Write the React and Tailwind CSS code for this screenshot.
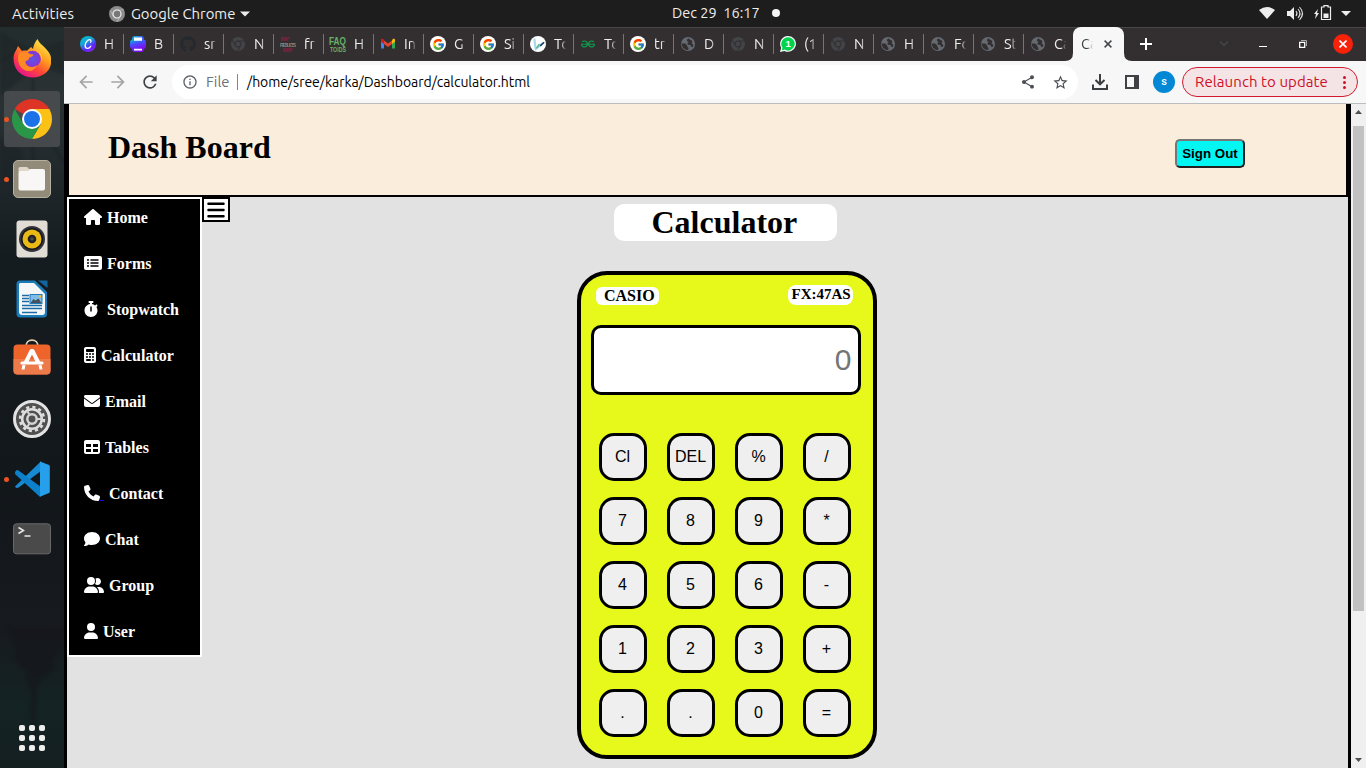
import React from "react";
import {
  FaHouse, FaRectangleList, FaStopwatch, FaCalculator, FaEnvelope, FaTable,
  FaPhone, FaComment, FaUserGroup, FaUser, FaBars, FaGithub, FaChrome,
} from "react-icons/fa6";
import { FcGoogle } from "react-icons/fc";
import { MdArrowBack, MdArrowForward, MdRefresh, MdInfoOutline, MdShare, MdStarBorder } from "react-icons/md";
import { SiGeeksforgeeks } from "react-icons/si";

const ui = "font-['Ubuntu','Open_Sans','Noto_Sans',sans-serif]";

/* ---------- favicons ---------- */
const Canva = () => (
  <svg viewBox="0 0 16 16" className="size-4">
    <defs>
      <linearGradient id="cv" x1="0.1" y1="0" x2="0.7" y2="1">
        <stop offset="0" stopColor="#00c4cc" /><stop offset="0.4" stopColor="#16a4d8" /><stop offset="0.75" stopColor="#6420ff" /><stop offset="1" stopColor="#7d2ae7" />
      </linearGradient>
    </defs>
    <circle cx="8" cy="8" r="8" fill="url(#cv)" />
    <path d="M10.600 6.200c.7-1.300.3-2.500-.9-2.500-2.300 0-4.600 3-4.600 5.700 0 1.900 1 2.900 2.400 2.900 1.400 0 2.600-.9 3.300-2.200" fill="none" stroke="#fff" strokeWidth="1.300" strokeLinecap="round" />
  </svg>
);
const Printer = () => (
  <svg viewBox="0 0 16 16" className="size-4">
    <defs><linearGradient id="pr" x1="0" y1="0" x2="0.5" y2="1"><stop offset="0" stopColor="#00c4cc" /><stop offset="0.5" stopColor="#4a4cff" /><stop offset="1" stopColor="#7d10f0" /></linearGradient></defs>
    <rect x="2" y="0" width="12" height="16" rx="3" fill="url(#pr)" />
    <rect x="0" y="3.500" width="16" height="9.500" rx="3" fill="url(#pr)" />
    <path d="M4 1.500h8v3.300H4zM4 12.700h8v1.800H4z" fill="#fff" />
  </svg>
);
const Results = () => (
  <svg viewBox="0 0 16 16" className="size-4 font-['Liberation_Sans',sans-serif]">
    <path d="M1 2h9M1 4h7M3 13h10M3 15h9" stroke="#7a2240" strokeWidth="1.300" />
    <text x="0" y="10.500" fontSize="5" fontWeight="700" fill="#858585" textLength="16">RESULTS</text>
  </svg>
);
const Faq = () => (
  <svg viewBox="0 0 16 16" className="size-4 overflow-visible font-['Liberation_Sans',sans-serif]">
    <text x="-1" y="8.500" fontSize="11" fontWeight="700" fill="#67b168" textLength="17" lengthAdjust="spacingAndGlyphs">FAQ</text>
    <text x="0" y="16" fontSize="7.500" fontWeight="700" fill="#67b168" textLength="16" lengthAdjust="spacingAndGlyphs">TOIDS</text>
  </svg>
);
const Gmail = () => (
  <svg viewBox="0 0 16 16" className="size-4">
    <path d="M1 5v7.500h3V7.200z" fill="#4285f4" /><path d="M15 5v7.500h-3V7.200z" fill="#34a853" />
    <path d="M12 4.300V8l3-2.300V4c0-1.200-1.300-1.600-2.200-.9z" fill="#fbbc04" />
    <path d="M4 8V4.500L8 7.600l4-3.100V8l-4 3z" fill="#ea4335" /><path d="M1 4c0-1.200 1.300-1.600 2.200-.9L4 4v4L1 5.700z" fill="#c5221f" />
  </svg>
);
const Google = () => (
  <span className="flex size-4 items-center justify-center rounded-full bg-white"><FcGoogle className="size-[13px]" /></span>
);
const Pen = () => (
  <svg viewBox="0 0 16 16" className="size-4">
    <circle cx="8" cy="8" r="8" fill="#fff" />
    <path d="M4.300 2.500l1.200 9.500" fill="none" stroke="#a5dcec" strokeWidth="2.200" />
    <path d="M5 13.800L13 7" stroke="#8fd0e6" strokeWidth="1.800" />
    <path d="M6.500 12l3-4" stroke="#54b88a" strokeWidth="1.300" />
    <path d="M9.800 9.200l3.700-3.400 1.200 1-4 3.600z" fill="#173b66" />
  </svg>
);
const Geeks = () => <SiGeeksforgeeks className="size-[14px] text-[#0f9a4a]" />;
const Globe = () => (
  <svg viewBox="0 0 16 16" className="size-4">
    <circle cx="8" cy="8" r="7" fill="#656a70" />
    <path d="M1.500 7.600h3.700l2.100 1.900v1.300l1.100.9v2.100l-2 .1c-2.600-.7-4.600-3-4.900-6.300zM7.200 3.200l1.800-1 .5 1.300 1.800.6 1.200 1.600-1 1.500 1.800 1.500-.3 2.100-1.700.2-.9-2-2.300-.3-.9-1.500 1.500-1.300-1.800-1z" fill="#332f31" />
  </svg>
);
const Chat1 = () => (
  <svg viewBox="0 0 16 16" className="size-4 font-['Liberation_Sans',sans-serif]">
    <path d="M8.200 0a7.900 7.900 0 1 1-3.800 14.900L0 16l1.200-4.200A7.900 7.900 0 0 1 8.200 0z" fill="#fff" />
    <path d="M8.200 1.200a6.700 6.700 0 1 1-3.700 12.400l-2.800.8.800-2.700A6.700 6.700 0 0 1 8.200 1.200z" fill="#00d34d" />
    <text x="5.600" y="11.300" fontSize="9.500" fontWeight="700" fill="#fff">1</text>
  </svg>
);
const Hub = () => <FaGithub className="size-4 text-[#24292e]" />;
const Chr = () => <FaChrome className="size-[14px] text-[#424447]" />;

const tabs = [
  [Canva, "H"], [Printer, "B"], [Hub, "sr"], [Chr, "N"], [Results, "fr"], [Faq, "H"], [Gmail, "In"],
  [Google, "G"], [Google, "Si"], [Pen, "To"], [Geeks, "To"], [Google, "tr"], [Globe, "D"], [Chr, "N"],
  [Chat1, "(1"], [Chr, "N"], [Globe, "H"], [Globe, "Fo"], [Globe, "St"], [Globe, "Ca"],
];

function Tab({ Icon, label }) {
  return (
    <div className="flex h-full w-[50px] shrink-0 items-center pl-[6px]">
      <span className="flex size-4 shrink-0 items-center justify-center"><Icon /></span>
      <span className="ml-2 w-[12px] overflow-hidden whitespace-nowrap text-[14.500px] leading-5 text-[#f0efef] [mask-image:linear-gradient(to_right,black_60%,transparent)]">{label}</span>
      <span className="ml-auto h-5 w-px bg-[#767475]" />
    </div>
  );
}

/* ---------- dock ---------- */
const Firefox = () => (
  <svg viewBox="0 0 38 40" className="-mt-[2px] h-10 w-[38px]">
    <defs>
      <linearGradient id="ff" x1="0.85" y1="0.05" x2="0.25" y2="0.95"><stop offset="0" stopColor="#fff14a" /><stop offset="0.4" stopColor="#ff9a1f" /><stop offset="0.7" stopColor="#ff4538" /><stop offset="1" stopColor="#e8158c" /></linearGradient>
      <radialGradient id="fp"><stop offset="0" stopColor="#5b55e8" /><stop offset="1" stopColor="#8a35d0" /></radialGradient>
    </defs>
    <path d="M5 8l4 5c1.500-.6 3.400-.6 5-.3l4-3.700 2 2c.6-4 2-7 4.500-10 1.500 5 10 9 13 16.500C41 31 31.500 39.500 19.500 39.500 8 39.500.5 31 .5 20.500.5 16 2.200 13.500 3 12.500z" fill="url(#ff)" />
    <circle cx="19.500" cy="21" r="8.300" fill="url(#fp)" />
    <path d="M6 15c4-2.200 8-1.500 11 1 1.500.2 3 .3 3.500 1-.6 1.800-3.200 1.800-4.500 3 .2 2.500-2.400 2.300-3.500 3.500C12 29 20 31 24 27c-2 6-9 8-14 4-5-4-6-10-4-16z" fill="#ff8a25" />
    <path d="M21 12c5 1 8 6 7 11 3-6-.5-12-7-11z" fill="#ffbd36" />
  </svg>
);
const ChromeLogo = () => (
  <svg viewBox="0 0 40 40" className="size-10">
    <path d="M20 20L2.680 10A20 20 0 0 1 37.320 10z" fill="#de3426" />
    <path d="M37.320 10A20 20 0 0 1 20 40l8.700-15L20 10z" fill="#fbc116" />
    <path d="M20 40A20 20 0 0 1 2.680 10l8.660 15L28.700 25z" fill="#2a9748" />
    <circle cx="20" cy="20" r="10" fill="#fff" /><circle cx="20" cy="20" r="8" fill="#1b72e8" />
  </svg>
);
const Files = () => (
  <svg viewBox="0 0 38 38" className="size-[38px]">
    <rect x="0.500" y="0.500" width="37" height="37" rx="4.500" fill="#938b79" stroke="#b6b0a2" />
    <path d="M5.500 12V8.500Q5.500 7 7 7h6.500q1 0 1.500.8l.8 1.200H20v3z" fill="#ded7ca" />
    <path d="M5.500 13q0-2 2-2h7.500l3-2H30q2 0 2 2V28.500q0 2-2 2H7.500q-2 0-2-2z" fill="#f9f7f5" />
  </svg>
);
const Speaker = () => (
  <svg viewBox="0 0 32 38" className="h-[38px] w-8">
    <rect x="0.500" y="0.500" width="31" height="37" rx="3" fill="#e2ddd4" />
    <circle cx="16" cy="19" r="13" fill="#34343c" /><circle cx="16" cy="19" r="11" fill="#17171b" />
    <circle cx="16" cy="19" r="9.500" fill="#e9b915" /><circle cx="16" cy="19" r="4.300" fill="#202127" /><circle cx="16" cy="19" r="1.800" fill="#4c4b43" />
  </svg>
);
const Writer = () => (
  <svg viewBox="0 0 32 38" className="h-[38px] w-8">
    <path d="M4 .5h15L31 12v22q0 3.500-3.500 3.500h-23Q.5 37.500.5 34V4Q.5.5 4 .5z" fill="#1a7bb8" />
    <path d="M22 .5h9.500V8z" fill="#12659d" />
    <path d="M4 3h14l11 11v18q0 3-2.500 3h-20Q3 35 3 32V4z" fill="#f4f6f7" />
    <path d="M6 15.500h7M6 18.500h7M6 21.500h7M6 25.500h20M6 28.500h20M6 32.500h15" stroke="#1b6ba8" strokeWidth="1.500" />
    <rect x="14" y="14.500" width="12" height="9" fill="#7fbce9" stroke="#2379ba" /><path d="M14.500 23l3-4 2 1.500 3-2 3 4.500z" fill="#46505d" /><circle cx="24" cy="16.500" r="1.300" fill="#f4ba24" />
  </svg>
);
const Software = () => (
  <svg viewBox="0 0 38 36" className="-mt-[5px] h-9 w-[38px]">
    <path d="M13 7.500c0-8.500 12-8.500 12 0" fill="none" stroke="#e5ceb1" strokeWidth="1.800" />
    <rect x="0.500" y="5.500" width="37" height="30" rx="4" fill="#ef642a" /><path d="M.5 20h37v11.500q0 4-4 4h-29q-4 0-4-4z" fill="#ec7a4a" />
    <path d="M12.500 24L18.500 12h1L25.500 24" fill="none" stroke="#fff" strokeWidth="4" strokeLinejoin="round" />
    <path d="M9 24h20" stroke="#fff" strokeWidth="3.200" strokeLinecap="round" /><path d="M11 26l-1 4.500M27 26l1 4.500" stroke="#fff" strokeWidth="3" />
  </svg>
);
const Settings = () => (
  <svg viewBox="0 0 38 38" className="size-[38px]">
    <circle cx="19" cy="19" r="17.500" fill="#505050" stroke="#e3e3e3" strokeWidth="3" />
    <circle cx="19" cy="19" r="12" fill="none" stroke="#dedede" strokeWidth="2.500" strokeDasharray="3.140 3.142" />
    <circle cx="19" cy="19" r="9.800" fill="none" stroke="#dedede" strokeWidth="2.500" />
    <circle cx="19" cy="19" r="4.700" fill="none" stroke="#d4d4d4" strokeWidth="2.500" />
    <path d="M23 19h6M17 15.500l-3-5M17 22.500l-3 5" stroke="#d4d4d4" strokeWidth="2" />
  </svg>
);
const Code = () => (
  <svg viewBox="0 0 36 36" className="size-9">
    <path d="M1.500 10.500q1.500-2 3.500-.6L27 26v9.700z" fill="#0c76bd" />
    <path d="M1 25.500q1 2.500 4 .8L27 10V.3z" fill="#168bd3" />
    <path d="M1.500 10.500q1.500-2 3.500-.6l21 16v9.500q0 .5-.5.200L1.500 13.500q-1.300-1.500 0-3z" fill="#0d80cb" />
    <path d="M26 .5l9 3.500q.8.400.8 1.500v25q0 1.200-.8 1.600L26 35.700z" fill="#27a0ec" />
  </svg>
);
const Terminal = () => (
  <svg viewBox="0 0 38 32" className="h-8 w-[38px]">
    <rect x="0.500" y="0.800" width="37" height="30" rx="3" fill="#4a4a4a" stroke="#686868" />
    <path d="M5.500 4.500l5 3-5 3" fill="none" stroke="#e8e8e8" strokeWidth="1.500" /><path d="M11.500 13h6" stroke="#e8e8e8" strokeWidth="1.500" />
  </svg>
);
const dock = [
  { I: Firefox }, { I: ChromeLogo, on: true, active: true }, { I: Files, on: true }, { I: Speaker }, { I: Writer },
  { I: Software }, { I: Settings }, { I: Code, on: true }, { I: Terminal },
];

function Dock() {
  return (
    <aside className="relative flex w-16 shrink-0 flex-col overflow-hidden bg-[linear-gradient(to_bottom,#232d2d_0px,#2b3234_70px,#20282c_150px,#151c20_230px,#12171a_460px,#171a1f_600px,#142324_680px,#141f20_741px)] pt-[1px]">
      <svg viewBox="0 0 64 741" className="absolute inset-0 h-full w-full opacity-50 blur-[1.500px]">
        <path d="M0 5l32 17 32-9v35L38 38 0 70zM0 110l22 14 8 46-30-20z" fill="#1b2225" />
        <path d="M33 45v115M0 35l18-12M40 100l24 35" stroke="#141a1d" strokeWidth="2" />
        <path d="M8 600l9 26-3 6 11 12 2 12 3 6 2 62h3l2-62 4-8 16-14-5-6 12-14v-20z" fill="#15151a" />
      </svg>
      {dock.map(({ I, on, active }, i) => (
        <div key={i} className="relative flex h-[60px] w-16 shrink-0 items-center pl-1">
          <div className={active ? "flex h-14 w-14 translate-y-[1px] items-center justify-center rounded-[3px] bg-[#4b4f51]/85" : "flex h-14 w-14 translate-y-[1px] items-center justify-center"}><I /></div>
          {on && <span className="absolute left-1 top-[29px] size-[5px] rounded-full bg-[#e95420]" />}
        </div>
      ))}
      <div className="relative mt-auto mb-[17px] grid w-[26px] grid-cols-3 gap-1 self-center">
        {Array.from({ length: 9 }, (_, i) => <span key={i} className="size-[6px] rounded-[2px] bg-[#eeeeec]" />)}
      </div>
    </aside>
  );
}

/* ---------- page ---------- */
const menu = [
  [FaHouse, "Home", "w-[18px]", "w-[23px]"], [FaRectangleList, "Forms", "w-[18px]", "w-[23px]"],
  [FaStopwatch, "Stopwatch", "w-[14px]", "w-[23px]"], [FaCalculator, "Calculator", "w-[12px]", "w-[17px]"],
  [FaEnvelope, "Email", "w-4", "w-[21px]"], [FaTable, "Tables", "w-4", "w-[21px]"],
  [FaPhone, "Contact", "w-4", "w-[25px]"], [FaComment, "Chat", "w-4", "w-[21px]"],
  [FaUserGroup, "Group", "w-5", "w-[25px]"], [FaUser, "User", "w-[14px]", "w-[19px]"],
];
const keys = ["Cl", "DEL", "%", "/", "7", "8", "9", "*", "4", "5", "6", "-", "1", "2", "3", "+", ".", ".", "0", "="];

function Page() {
  return (
    <main className="flex min-w-0 flex-1 flex-col border-x-[3px] border-black bg-[#e2e2e2] font-['Liberation_Serif',serif] text-black">
      <header className="flex h-[93px] shrink-0 items-center justify-between border-x-2 border-b-2 border-black bg-[#fbeddc] pl-[39px] pr-[101px]">
        <h1 className="-mt-[5px] text-[32px] font-bold leading-[37px]">Dash Board</h1>
        <button className="mt-[7px] h-[29px] w-[70px] whitespace-nowrap rounded-[5px] border-2 border-t-[#767676] border-l-[#767676] border-b-[#212121] border-r-[#212121] bg-[#04f6f2] font-['Liberation_Sans',sans-serif] text-[13.333px] font-bold leading-[15px]">Sign Out</button>
      </header>
      <div className="flex min-h-0 flex-1 items-start">
        <nav className="h-[460px] w-[135px] shrink-0 border-2 border-white bg-black pl-[15px] text-white">
          {menu.map(([Icon, label, w, slot]) => (
            <a key={label} className="flex h-[46px] items-start pt-[9px] text-base font-bold leading-[18px]">
              <span className={`flex shrink-0 items-end pt-[1px] ${slot}`}>
                <Icon className={`h-4 shrink-0 ${w}`} />
                {label === "Contact" && <span className="h-px w-1 bg-[#2200ee]" />}
              </span>
              <span className="pt-[1px]">{label}</span>
            </a>
          ))}
        </nav>
        <button className="flex h-[25px] w-7 shrink-0 items-center justify-center border-2 border-black bg-white"><FaBars className="h-5 w-[18px]" /></button>
        <section className="ml-[347px] flex w-[300px] flex-col items-start pt-[7px]">
          <h2 className="ml-[37px] h-[37px] w-[223px] rounded-[10px] bg-white pl-[37.500px] text-[32px] font-bold leading-[37px]">Calculator</h2>
          <div className="mt-[30px] flex h-[488px] w-[300px] flex-col rounded-[30px] border-4 border-black bg-[#e6f91a] px-[10px]">
            <div className="flex items-start justify-between pl-[5px] pr-[10px] pt-[10px]">
              <span className="mt-[2px] h-[18px] w-[63px] rounded-[6px] bg-white pl-2 text-base font-bold leading-[18px]">CASIO</span>
              <span className="h-5 w-[65px] rounded-[8px] bg-white pl-[3.500px] text-[15px] font-bold leading-[18px]">FX:47AS</span>
            </div>
            <div className="mt-5 flex h-[70px] w-[270px] items-center justify-end rounded-[10px] border-[3px] border-black bg-white pr-[6.500px] font-['Liberation_Sans',sans-serif] text-[30px] leading-none text-[#757575]">0</div>
            <div className="mt-[38px] grid grid-cols-[repeat(4,48px)] gap-x-5 gap-y-4 pl-2">
              {keys.map((k, i) => (
                <button key={i} className="flex size-12 items-center justify-center rounded-[15px] border-[3px] border-black bg-[#efefef] pr-[1px] font-['Liberation_Sans',sans-serif] text-base leading-[18px]">{k}</button>
              ))}
            </div>
          </div>
        </section>
      </div>
    </main>
  );
}

export default function App() {
  return (
    <div className={`flex h-[768px] w-[1366px] flex-col overflow-hidden bg-[#1d1d1d] ${ui}`}>
      <div className="relative flex h-[27px] shrink-0 items-center bg-[#1d1d1d] text-[14.900px] leading-5 text-[#eeeeec]">
        <span className="w-[97px] pl-3"><span className="tracking-[0.100px]">Activities</span></span>
        <span className="ml-3 flex size-4 items-center justify-center">
          <svg viewBox="0 0 16 16" className="size-4"><circle cx="8" cy="8" r="8" fill="#8c8c8c" /><path d="M8 4h7M4.500 10L1 4M11.500 10L8 16" stroke="#b0b0b0" /><circle cx="8" cy="8" r="4" fill="#777" stroke="#f0f0f0" strokeWidth="1.200" /></svg>
        </span>
        <span className="ml-[6px] w-[105px] whitespace-nowrap">Google Chrome</span>
        <svg viewBox="0 0 10 6" className="ml-1 h-[6px] w-[10px]"><path d="M0 .5h10L5 5.500z" fill="#eee" /></svg>
        <span className="absolute left-[672px] top-[3px] whitespace-pre text-[14.500px]">Dec 29  16:17</span>
        <span className="absolute left-[772px] top-[9px] size-2 rounded-full bg-[#f4f4f4]" />
        <svg viewBox="0 0 96 20" className="mb-[1px] ml-auto mr-[12px] h-5 w-24">
          <path d="M1 7q8-6 16 0l-8 9z" fill="#eee" />
          <path d="M29 8h3l4-4v13l-4-4h-3z" fill="#eee" />
          <path d="M38 8q2 2.500 0 5M40 6q4 4.500 0 9M41.500 4q6 6.500 0 13" fill="none" stroke="#ddd" strokeWidth="1.100" />
          <path d="M60 6l-4 5h2l-1 5 4-6h-2z" fill="#eee" />
          <path d="M63.500 4h2.500V2.700h4V4h2.500v12.500h-9z" fill="none" stroke="#eee" strokeWidth="1.200" /><path d="M65.500 10.500h5v4.500h-5z" fill="#eee" />
          <path d="M83 8h10l-5 5z" fill="#eee" />
        </svg>
      </div>

      <div className="flex min-h-0 flex-1">
        <Dock />
        <div className="flex min-w-0 flex-1 flex-col">
          <div className="flex h-[34px] shrink-0 items-center border-t border-[#4a4748] bg-[#332f31] pb-[1px] pl-[10px]">
            {tabs.map(([Icon, label], i) => <Tab key={i} Icon={Icon} label={label} />)}
            <div className="relative -ml-[1px] -mt-[1px] flex h-[34px] w-[51px] shrink-0 items-center self-start rounded-t-[8px] bg-[#f7f7f7] pl-2">
              <svg viewBox="0 0 67 8" className="absolute -left-2 bottom-0 h-2 w-[67px]"><path d="M0 8Q8 8 8 0v8zM67 8Q59 8 59 0v8z" fill="#f7f7f7" /></svg>
              <span className="w-[12px] overflow-hidden text-[14.500px] leading-5 text-[#3c4043] [mask-image:linear-gradient(to_right,black_50%,transparent)]">Ca</span>
              <svg viewBox="0 0 8 8" className="ml-[11px] size-2"><path d="M.6.6l6.800 6.800M7.400.6L.6 7.400" stroke="#45474a" strokeWidth="1.500" /></svg>
            </div>
            <svg viewBox="0 0 12 12" className="ml-4 size-3"><path d="M6 0v12M0 6h12" stroke="#fff" strokeWidth="2" /></svg>
            <svg viewBox="0 0 10 6" className="ml-[67px] h-[6px] w-[10px]"><path d="M1 .5l4 4 4-4" fill="none" stroke="#464748" strokeWidth="1.500" /></svg>
            <span className="ml-[30px] mt-[5px] h-px w-2 bg-white" />
            <svg viewBox="0 0 8 8" className="ml-8 size-2"><path d="M.7 2.300h5v5h-5z" fill="none" stroke="#fff" strokeWidth="1.300" /><path d="M2 .5h5.500v5.500" fill="none" stroke="#aaa" strokeWidth="1" /></svg>
            <span className="ml-[26px] flex size-5 items-center justify-center rounded-full bg-[#f8220b]">
              <svg viewBox="0 0 8 8" className="size-2"><path d="M.5.5l7 7M7.500.5l-7 7" stroke="#fff" strokeWidth="1.600" /></svg>
            </span>
          </div>

          <div className="flex h-[43px] shrink-0 items-center border-b border-[#bdbcbd] bg-[#f7f7f7] pl-3 pr-2 text-[#3f4245]">
            <MdArrowBack className="size-5 text-[#a5a5a5]" />
            <MdArrowForward className="ml-3 size-5 text-[#a5a5a5]" />
            <MdRefresh className="ml-3 size-5" />
            <div className="ml-3 flex h-[34px] w-[906px] items-center rounded-full bg-white pl-[10px] pr-[10px] text-[14px]">
              <MdInfoOutline className="size-4 text-[#5f6368]" />
              <span className="ml-2 w-[31px] text-[14.800px] text-[#6b7079]">File</span>
              <span className="h-4 w-px bg-[#858688]" />
              <span className="ml-[9px] whitespace-nowrap text-[14px] tracking-[-0.030px] text-black">/home/sree/karka/Dashboard/calculator.html</span>
              <MdShare className="ml-auto size-4 text-[#4b4e52]" />
              <MdStarBorder className="ml-4 size-[17px] -mr-[1px] text-[#4b4e52]" />
            </div>
            <svg viewBox="0 0 16 16" className="ml-[14px] size-4"><path d="M8 0v10M3.500 6L8 10.300 12.500 6M1 10.500v4.500h14v-4.500" fill="none" stroke="#3c3f42" strokeWidth="2" /></svg>
            <svg viewBox="0 0 14 14" className="ml-[17px] size-[14px]"><path d="M1 1h12v12H1z" fill="none" stroke="#3f4144" strokeWidth="2" /><path d="M9 1h4v12H9z" fill="#3f4144" /></svg>
            <span className="ml-[14px] flex size-[22px] items-center justify-center rounded-full bg-[#0288d4] font-['Roboto',sans-serif] text-[11px] font-medium text-white">s</span>
            <div className="ml-[7px] flex h-[30px] w-[176px] items-center rounded-full border border-[#d11a2f] bg-[#f5e4e6] pl-3 pr-[11px] text-[15px] text-[#cc1027]">
              <span className="whitespace-nowrap tracking-[0.080px]">Relaunch to update</span>
              <span className="ml-auto flex flex-col gap-[2px]">
                <i className="size-[3px] rounded-full bg-[#cc1027]" /><i className="size-[3px] rounded-full bg-[#cc1027]" /><i className="size-[3px] rounded-full bg-[#cc1027]" />
              </span>
            </div>
          </div>

          <div className="flex min-h-0 flex-1">
            <Page />
            <div className="flex w-[15px] shrink-0 flex-col items-center bg-[#f0f0f0]">
              <svg viewBox="0 0 7 4" className="mt-[6px] h-1 w-[7px]"><path d="M0 4l3.500-4L7 4z" fill="#505050" /></svg>
              <div className="mt-3 h-[485px] w-[11px] bg-[#c1c1c1]" />
              <svg viewBox="0 0 7 4" className="mt-auto mb-[6px] h-1 w-[7px]"><path d="M0 0l3.500 4L7 0z" fill="#505050" /></svg>
            </div>
          </div>
        </div>
      </div>
    </div>
  );
}
